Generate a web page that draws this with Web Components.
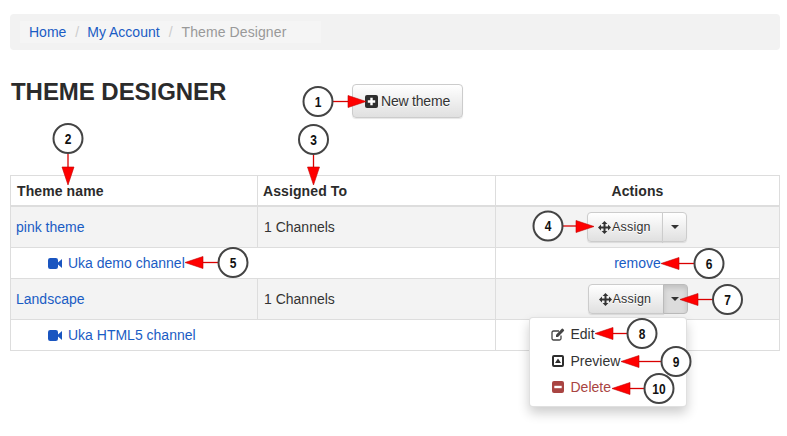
<!DOCTYPE html>
<html lang="en"><head><meta charset="utf-8"><title>Theme Designer</title>
<style>
html,body{margin:0;background:#fff}
body{font:14px/20px "Liberation Sans",Arial,sans-serif;color:#333;width:787px;height:436px;overflow:hidden;position:relative}
a{color:inherit;text-decoration:none}
</style></head><body>
<designer-page>
  <crumb-bar>
    <crumb-item href="#">Home</crumb-item>
    <crumb-item href="#">My Account</crumb-item>
    <crumb-item>Theme Designer</crumb-item>
  </crumb-bar>
  <page-head>
    <span slot="title">THEME DESIGNER</span>
    <ui-button slot="action"><ui-icon name="plus"></ui-icon>New theme</ui-button>
  </page-head>
  <theme-table>
    <theme-row head><span>Theme name</span><span slot="assigned">Assigned To</span><span slot="actions">Actions</span></theme-row>
    <theme-row>
      <ui-link>pink theme</ui-link><span slot="assigned">1 Channels</span>
      <split-button slot="actions" style="margin-right:1px"></split-button>
    </theme-row>
    <channel-row name="Uka demo channel"><ui-link>remove</ui-link></channel-row>
    <theme-row>
      <ui-link>Landscape</ui-link><span slot="assigned">1 Channels</span>
      <split-button slot="actions" open>
        <menu-item icon="edit">Edit</menu-item>
        <menu-item icon="preview">Preview</menu-item>
        <menu-item icon="delete" danger>Delete</menu-item>
      </split-button>
    </theme-row>
    <channel-row name="Uka HTML5 channel"></channel-row>
  </theme-table>
  <call-outs></call-outs>
</designer-page>
<script>
const FONT='"Liberation Sans",Arial,sans-serif';
const LINK='#1a5cc4';
function def(name,html,extra={}){
  const t=document.createElement('template');t.innerHTML=html;
  customElements.define(name,class extends HTMLElement{
    constructor(){super();this.attachShadow({mode:'open'}).appendChild(t.content.cloneNode(true));}
    connectedCallback(){extra.init&&extra.init.call(this);}
  });
}
const ICONS={
  plus:'<svg width="13" height="13" viewBox="0 0 13 13"><rect width="13" height="13" rx="2" fill="#2e2e2e"/><path d="M5.3 2.8h2.4v2.5h2.5v2.4H7.700v2.500H5.300V7.700H2.800V5.300h2.500z" fill="#fff"/></svg>',
  move:'<svg width="13" height="13" viewBox="0 0 13 13"><path d="M6.500 0 9.400 3H7.500V5.500h2.500V3.600L13 6.500 10 9.400V7.500H7.500V10h1.900L6.500 13 3.600 10h1.900V7.500H3v1.900L0 6.500 3 3.600v1.900h2.500V3H3.600z" fill="#333"/></svg>',
  video:'<svg width="14" height="11" viewBox="0 0 14 11"><rect width="10" height="11" rx="2.200" fill="#1a55c0"/><path d="M10 4.500 14 1v9L10 6.500z" fill="#1a55c0"/></svg>',
  edit:'<svg width="14" height="13" viewBox="0 0 14 13"><path d="M10 7.500V10.500a1.500 1.500 0 0 1-1.500 1.500H2.500A1.500 1.500 0 0 1 1 10.500V4.500A1.500 1.500 0 0 1 2.500 3H8" fill="none" stroke="#444" stroke-width="1.300"/><path d="M5 6.800 10.800.8a.8.8 0 0 1 1.100 0l1 1a.8.8 0 0 1 0 1.100L7 9H5z" fill="#444"/></svg>',
  preview:'<svg width="12" height="12" viewBox="0 0 12 12"><rect x="1" y="1" width="10" height="10" rx="1" fill="none" stroke="#2e2e2e" stroke-width="2"/><path d="M6 3.500 9 8H3z" fill="#2e2e2e"/></svg>',
  delete:'<svg width="12" height="12" viewBox="0 0 12 12"><rect width="12" height="12" rx="2" fill="#a94442"/><rect x="2.300" y="4.800" width="7.400" height="2.400" fill="#fff"/></svg>'
};
def('ui-icon','<style>:host{display:inline-flex;flex:none}</style><span id="i" style="display:flex"></span>',{init(){this.shadowRoot.getElementById('i').innerHTML=ICONS[this.getAttribute('name')]||'';}});
def('designer-page','<style>:host{display:block;padding:14px 7px 0 10px}</style><slot></slot>');
def('crumb-bar',`<style>:host{display:flex;align-items:center;height:36px;padding:0 10px;background:#f2f2f2;border-radius:4px;font:14px/20px ${FONT}}
.in{display:flex;align-items:center;height:22px;width:301px;box-sizing:border-box;padding:0 9px;background:#f5f5f5}
::slotted(crumb-item:not(:first-child))::before{content:"/";color:#ccc;padding:0 8px 0 9px}</style><div class="in"><slot></slot></div>`);
def('crumb-item',`<style>:host{display:inline-block;color:#999}a{color:${LINK}}</style><span id="c"></span>`,{init(){
  const c=this.shadowRoot.getElementById('c');if(c.firstChild)return;
  if(this.hasAttribute('href')){const a=document.createElement('a');a.href=this.getAttribute('href');a.style.textDecoration='none';a.append(...this.childNodes);c.append(a);}
  else {c.style.letterSpacing='.1px';c.style.marginLeft='1px';c.append(...this.childNodes);}
}});
def('page-head',`<style>:host{display:flex;align-items:flex-start;margin:34px 0 57px;height:34px}
.t{font:bold 24px/26px ${FONT};color:#2b2b2b;width:342px;padding-left:1px;margin-top:-5px;letter-spacing:-.05px;box-sizing:border-box}
</style><div class="t"><slot name="title"></slot></div><slot name="action"></slot>`);
def('ui-button',`<style>:host{display:inline-flex;align-items:center;box-sizing:border-box;height:34px;padding:0 12px;gap:3px;border:1px solid #ccc;border-radius:4px;background:linear-gradient(#fff,#e0e0e0);box-shadow:0 1px 1px rgba(0,0,0,.1);color:#333;font:14px/20px ${FONT};letter-spacing:-.2px;text-shadow:0 1px 0 #fff;white-space:nowrap}</style><slot></slot>`);
def('ui-link',`<style>:host{display:inline;color:${LINK};font:14px/20px ${FONT}}</style><slot></slot>`);
def('theme-table','<style>:host{display:block;border:1px solid #ddd;border-bottom:0;width:770px;box-sizing:border-box}</style><slot></slot>');
def('theme-row',`<style>
:host{display:grid;grid-template-columns:247px 238px 1fr;height:41px;background:#f3f3f3;border-bottom:1px solid #ddd;box-sizing:border-box;font:14px/20px ${FONT};color:#333}
:host([head]){height:31px;background:#fff;border-bottom-width:2px;font-weight:bold;color:#2b2b2b;letter-spacing:.1px}
.c{display:flex;align-items:center;border-right:1px solid #ddd;padding-left:5px;box-sizing:border-box}
:host([head]) .c{padding-left:6px}
.c.b{padding-left:6px}:host([head]) .c.b{padding-left:5px}
.c.a,:host([head]) .c.a{justify-content:center;border-right:0;padding:0}
</style><div class="c"><slot></slot></div><div class="c b"><slot name="assigned"></slot></div><div class="c a"><slot name="actions"></slot></div>`);
def('channel-row',`<style>
:host{display:grid;grid-template-columns:485px 1fr;height:31px;border-bottom:1px solid #ddd;box-sizing:border-box;font:14px/20px ${FONT}}
.n{display:flex;align-items:center;gap:6px;padding-left:37px;border-right:1px solid #ddd;color:${LINK}}
.a{display:flex;align-items:center;justify-content:center}
</style><div class="n"><ui-icon name="video"></ui-icon><span id="n"></span></div><div class="a"><slot></slot></div>`,{init(){this.shadowRoot.getElementById('n').textContent=this.getAttribute('name');}});
def('split-button',`<style>
:host{display:inline-flex;position:relative;font:12.500px/20px ${FONT}}
.m,.d{display:flex;align-items:center;box-sizing:border-box;height:30px;border:1px solid #ccc;background:linear-gradient(#fff,#e0e0e0);box-shadow:0 1px 1px rgba(0,0,0,.1);color:#333;text-shadow:0 1px 0 #fff}
.m{width:76px;gap:1px;border-radius:4px 0 0 4px;padding-left:10px;letter-spacing:.2px}
.d{width:25px;margin-left:-1px;justify-content:center;border-radius:0 4px 4px 0}
.d i{width:0;height:0;border:4px solid transparent;border-top-color:#333;border-bottom:0}
:host([open]) .d{background:#dcdcdc;box-shadow:inset 0 3px 5px rgba(0,0,0,.125);border-color:#bbb}
.menu{display:none;position:absolute;z-index:5;left:-59px;top:33px;width:158px;box-sizing:border-box;padding:3px 0 5px;background:#fff;border:1px solid rgba(0,0,0,.12);border-radius:4px;box-shadow:0 6px 12px rgba(0,0,0,.2)}
:host([open]) .menu{display:block}
</style><div class="m"><ui-icon name="move"></ui-icon>Assign</div><div class="d"><i></i></div><div class="menu"><slot></slot></div>`);
def('menu-item',`<style>:host{display:flex;align-items:center;height:26.500px;padding-left:21px;gap:6px;font:14px/20px ${FONT};color:#333}
:host([danger]){color:#a94442}.w{width:14px;display:flex;justify-content:center}</style><span class="w" id="i"></span><slot></slot>`,{init(){this.shadowRoot.getElementById('i').innerHTML=ICONS[this.getAttribute('icon')];}});
const CALLS=[
 [1,318,101.5,366,101.5],[2,68,138.5,68,185],[3,313.5,139.5,313.5,185],[4,548,226,594,226.5],
 [5,233,262.5,185,262.5],[6,709,263.5,661,263.5],[7,727.5,299.5,680,299.5],[8,642,333.5,595,333.5],
 [9,676,361.5,621,361.5],[10,659,388.5,612,388.5]];
function callouts(){
  let s='';
  for(const [n,cx,cy,tx,ty] of CALLS){
    const r=14.5;let line,head;
    if(tx===cx){line=`M${cx} ${cy+r}V${ty-17}`;head=`${tx-6},${ty-18} ${tx+6},${ty-18} ${tx},${ty}`;}
    else{const d=tx>cx?1:-1;line=`M${cx+d*r} ${cy}H${tx-d*17}`;head=`${tx-d*18},${ty-6} ${tx-d*18},${ty+6} ${tx},${ty}`;}
    s+=`<path d="${line}" stroke="#d90000" stroke-width="1.300" fill="none"/><polygon points="${head}" fill="#f00" stroke="#c00000" stroke-width=".6"/>`;
    s+=`<circle cx="${cx}" cy="${cy}" r="${r}" fill="#fff" stroke="#444" stroke-width="2"/>`;
    s+=`<text transform="translate(${cx} ${cy+5.3}) scale(.8 1)" text-anchor="middle" font-family="Liberation Sans" font-weight="bold" font-size="15" fill="#111">${n}</text>`;
  }
  return s;
}
def('call-outs','<style>:host{position:absolute;left:0;top:0;z-index:10;pointer-events:none}svg{display:block}</style><svg id="s" width="787" height="436"></svg>',{init(){this.shadowRoot.getElementById('s').innerHTML=callouts();}});
</script>
</body></html>
